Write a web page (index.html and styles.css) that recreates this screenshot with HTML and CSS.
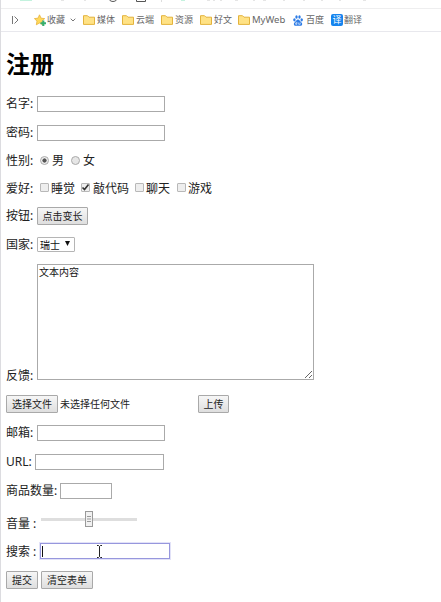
FILE: index.html
```
<!DOCTYPE html>
<html lang="zh-CN">
<head>
    <meta charset="UTF-8">
    <title>注册</title>
    <link rel="stylesheet" href="styles.css">
</head>
<body>
    <svg class="toolbar" width="440" height="8" viewBox="0 0 440 8">
        <path d="M19 0H31" stroke="#b5efd6" stroke-width="1.6"/>
        <path d="M60 0h3M83 0h2" stroke="#ccc"/>
        <circle cx="112" cy="-3.5" r="5" fill="none" stroke="#555"/>
        <path d="M135.500 0V1.500H144.500V0" fill="none" stroke="#555"/>
        <path d="M160.500 0V2" stroke="#ddd"/>
        <path d="M180 0h4" stroke="#8be5bf"/>
        <path d="M206 0h3M212 0h2M219 0h2M234 0h3M252 0h2M262 0h3M282 0h2M302 0h2M320 0h2M338 0h2M362 0h3" stroke="#ccc"/>
    </svg>

    <div class="bookmarks">
        <svg class="panel" width="8" height="10" viewBox="0 0 8 10"><path d="M1.500 1V9M3.500 1.500L7 5L3.500 8.500" fill="none" stroke="#777"/></svg>
        <span class="bookmark fav">
            <svg width="13" height="13" viewBox="0 0 13 13">
                <path d="M5.500 .8L7.100 4.200L10.700 4.600L8 7.100L8.700 10.800L5.500 9L2.300 10.800L3 7.100L.4 4.600L4 4.200Z" fill="#ffd95a" stroke="#e7b33c" stroke-width=".8"/>
                <path d="M9.300 6.500V12M6.500 9.300H12" stroke="#35ae70" stroke-width="2.100"/>
            </svg>
            收藏
        </span>
        <svg class="arrow" width="6" height="4" viewBox="0 0 6 4"><path d="M.7 .7L3 3L5.300 .7" fill="none" stroke="#777"/></svg>
        <span class="bookmark b1"><svg width="12" height="10" viewBox="0 0 12 10"><path d="M.5 .7H4.500L6 2.200H11.500V9.400H.5Z" fill="#ffe285" stroke="#e3b33d"/></svg>媒体</span>
        <span class="bookmark b2"><svg width="12" height="10" viewBox="0 0 12 10"><path d="M.5 .7H4.500L6 2.200H11.500V9.400H.5Z" fill="#ffe285" stroke="#e3b33d"/></svg>云端</span>
        <span class="bookmark b3"><svg width="12" height="10" viewBox="0 0 12 10"><path d="M.5 .7H4.500L6 2.200H11.500V9.400H.5Z" fill="#ffe285" stroke="#e3b33d"/></svg>资源</span>
        <span class="bookmark b4"><svg width="12" height="10" viewBox="0 0 12 10"><path d="M.5 .7H4.500L6 2.200H11.500V9.400H.5Z" fill="#ffe285" stroke="#e3b33d"/></svg>好文</span>
        <span class="bookmark b5"><svg width="12" height="10" viewBox="0 0 12 10"><path d="M.5 .7H4.500L6 2.200H11.500V9.400H.5Z" fill="#ffe285" stroke="#e3b33d"/></svg>MyWeb</span>
        <span class="bookmark b6">
            <svg width="10" height="11" viewBox="0 0 10 11">
                <g fill="#2c7be5">
                    <ellipse cx="1.400" cy="4.800" rx="1.200" ry="1.600"/>
                    <ellipse cx="3.500" cy="2" rx="1.200" ry="1.700"/>
                    <ellipse cx="6.500" cy="2" rx="1.200" ry="1.700"/>
                    <ellipse cx="8.700" cy="4.800" rx="1.200" ry="1.600"/>
                    <path d="M5 4.500C3.500 4.500 3.200 6.200 1.800 7.200C.2 8.400 .8 11 3 10.700H7C9.400 11 9.900 8.500 8.200 7.200C6.800 6.200 6.500 4.500 5 4.500Z"/>
                </g>
                <path d="M3.900 6.800V9.300H2.700V7.900H3.900M5.700 7.500V9.300H7.200V7.500" fill="none" stroke="#fff" stroke-width=".6"/>
            </svg>
            百度
        </span>
        <span class="bookmark b7"><span class="trans">译</span>翻译</span>
    </div>

    <h1>注册</h1>

    <form class="form">
        <div class="row"><span class="label">名字:</span><input class="text"></div>
        <div class="row tall"><span class="label">密码:</span><input class="text"></div>
        <div class="row">
            <span class="label">性别:</span>
            <span class="radio checked"></span><span class="man">男</span>
            <span class="radio"></span><span>女</span>
        </div>
        <div class="row short">
            <span class="label">爱好:</span>
            <span class="check"></span><span class="option sleep">睡觉</span>
            <span class="check"><svg width="9" height="9" viewBox="0 0 9 9"><path d="M1.500 4.500L3.500 6.600L7.500 1.500" fill="none" stroke="#333" stroke-width="1.600"/></svg></span><span class="option code">敲代码</span>
            <span class="check"></span><span class="option chat">聊天</span>
            <span class="check"></span><span class="option">游戏</span>
        </div>
        <div class="row"><span class="label">按钮:</span><button type="button" class="btn long">点击变长</button></div>
        <div class="row tall"><span class="label">国家:</span><span class="select">瑞士<svg width="5" height="5" viewBox="0 0 5 5"><path d="M0 0H5L2.500 5Z" fill="#111"/></svg></span></div>
        <div class="row area"><span class="label">反馈:</span><textarea>文本内容</textarea></div>
        <div class="row tall">
            <button type="button" class="btn file">选择文件</button>
            <span class="filename">未选择任何文件</span>
            <button type="button" class="btn upload">上传</button>
        </div>
        <div class="row tall"><span class="label">邮箱:</span><input class="text"></div>
        <div class="row tall"><span class="label url">URL:</span><input class="text wide"></div>
        <div class="row tall"><span class="label num">商品数量:</span><input class="text number"></div>
        <div class="row volume">
            <span class="label">音量 :</span>
            <span class="range"><span class="thumb"><svg width="8" height="16" viewBox="0 0 8 16"><path d="M2 5.500H6M2 8H6M2 10.500H6" stroke="#999"/></svg></span></span>
        </div>
        <div class="row">
            <span class="label colon">搜索 :</span>
            <span class="search">
                <span class="caret"></span>
                <svg class="cursor" width="7" height="13" viewBox="0 0 7 13"><path d="M1 .5H2.500L3.500 1.500L4.500 .5H6M3.500 1.500V11.500M1 12.500H2.500L3.500 11.500L4.500 12.500H6" fill="none" stroke="#222"/></svg>
            </span>
        </div>
        <div class="row last"><button type="button" class="btn submit">提交</button><button type="button" class="btn reset">清空表单</button></div>
    </form>
</body>
</html>
```
FILE: styles.css
```
* {
    box-sizing: border-box;
}

body {
    margin: 0;
    height: 602px;
    overflow: hidden;
    border-left: 1px solid #dcdce0;
    background-color: #fff;
    font-family: "Noto Sans", "Noto Sans CJK SC", sans-serif;
    font-size: 12px;
    color: #222;
}

.toolbar {
    display: block;
}

.bookmarks {
    height: 24px;
    display: flex;
    align-items: center;
    border-top: 1px solid #eeeeef;
    border-bottom: 1px solid #e8e8ed;
    padding-left: 10px;
    font-size: 9px;
    line-height: 14px;
    color: #666;
    white-space: nowrap;
}

.bookmark {
    display: flex;
    align-items: center;
    gap: 2px;
    flex: none;
}

.fav {
    width: 33px;
    margin-left: 15px;
    gap: 0;
}

.arrow {
    margin-left: 3px;
}

.b1 {
    width: 39px;
    margin-left: 7px;
}

.b2, .b3 {
    width: 39px;
}

.b4 {
    width: 38px;
}

.b5 {
    width: 55px;
    font-size: 9.5px;
}

.b6 {
    width: 38px;
    gap: 3px;
}

.b7 {
    gap: 1px;
}

.trans {
    width: 12px;
    height: 12px;
    border-radius: 2px;
    background-color: #1684ee;
    color: #fff;
    font-size: 9px;
    line-height: 11px;
    text-align: center;
}

h1 {
    margin: 0;
    height: 58px;
    padding: 14px 0 0 5px;
    font-size: 24px;
    line-height: 35px;
    color: #000;
}

.form {
    padding-left: 5px;
}

.row {
    height: 28px;
    display: flex;
    align-items: center;
    line-height: 18px;
    white-space: nowrap;
}

.tall {
    height: 29px;
}

.short {
    height: 27px;
}

.label {
    width: 31px;
    flex: none;
}

.text {
    width: 128px;
    height: 16px;
    padding: 1px;
    border: 1px solid #aaa;
    background-color: #fff;
    outline: none;
}

.wide {
    width: 129px;
}

.radio {
    width: 9px;
    height: 9px;
    margin: 0 3px 2px 3px;
    border: 1px solid #aaa;
    border-radius: 50%;
    background-color: #e6e6e6;
}

.checked {
    background: radial-gradient(circle, #555 0, #555 1.8px, #eee 2.4px);
}

.man {
    margin-right: 4px;
}

.check {
    width: 9px;
    height: 9px;
    margin: 0 2px 2px 3px;
    border: 1px solid #b8b8b8;
    border-radius: 1px;
    background-color: #eee;
    flex: none;
}

.check svg {
    display: block;
    margin: -1px;
}

.sleep {
    margin-right: 3px;
}

.code {
    margin-left: 1px;
    margin-right: 3px;
}

.chat {
    margin-right: 4px;
}

.btn {
    height: 18px;
    padding: 0;
    border: 1px solid #a9a9a9;
    border-radius: 1px;
    background: linear-gradient(#f6f6f6, #dedede);
    font-family: inherit;
    font-size: 10px;
    line-height: 16px;
    color: #222;
    flex: none;
}

.long {
    width: 51px;
}

.select {
    width: 38px;
    height: 15px;
    display: flex;
    align-items: center;
    gap: 5px;
    border: 1px solid #b5b5b5;
    border-radius: 1px;
    padding: 1px 0 0 2px;
    font-size: 10px;
    line-height: 13px;
    color: #111;
}

.select svg {
    margin-bottom: 3px;
}

.area {
    height: 130px;
    align-items: flex-end;
    padding-bottom: 9px;
}

.area .label {
    margin-bottom: -5px;
}

textarea {
    width: 277px;
    height: 116px;
    margin: 0;
    padding: 0 1px;
    border: 1px solid #aaa;
    font-family: "Noto Sans CJK SC", sans-serif;
    font-size: 10px;
    line-height: 13px;
    color: #111;
    outline: none;
}

.file {
    width: 52px;
}

.filename {
    width: 138px;
    margin-left: 2px;
    font-size: 10px;
}

.upload {
    width: 31px;
}

.url {
    width: 29px;
}

.num {
    width: 54px;
}

.number {
    width: 52px;
}

.volume {
    height: 32px;
}

.volume .label {
    width: 35px;
    margin-top: 6px;
}

.range {
    width: 96px;
    height: 3px;
    margin-bottom: 3px;
    background-color: #dedede;
}

.thumb {
    display: block;
    width: 8px;
    height: 16px;
    margin: -7px 0 0 44px;
    border: 1px solid #999;
    background-color: #f1f1f1;
}

.thumb svg {
    display: block;
    margin: -1px;
}

.colon {
    width: 34px;
    padding-top: 1px;
}

.search {
    width: 130px;
    height: 16px;
    display: flex;
    align-items: center;
    border: 1px solid #9797dd;
    outline: 1px solid #e2e2f8;
    padding-left: 1px;
}

.caret {
    width: 1px;
    height: 11px;
    background-color: #111;
}

.cursor {
    margin-left: 53px;
}

.last {
    height: 30px;
    gap: 3px;
}

.submit {
    width: 32px;
}

.reset {
    width: 52px;
}
```
